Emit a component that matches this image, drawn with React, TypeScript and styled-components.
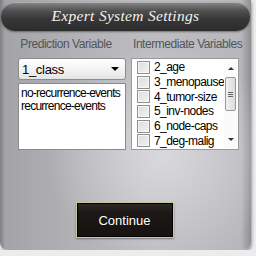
import styled, { createGlobalStyle } from 'styled-components';

const predictionValues = ['no-recurrence-events', 'recurrence-events'];
const intermediate = ['2_age', '3_menopause', '4_tumor-size', '5_inv-nodes', '6_node-caps', '7_deg-malig'];

function App() {
  return (
    <>
      <GlobalStyle />
      <Window>
        <TitleBar>Expert System Settings</TitleBar>
        <Columns>
          <Column>
            <Label shift={-6}>Prediction Variable</Label>
            <Select>
              <span>1_class</span>
              <Arrow />
            </Select>
            <ValueList>
              {predictionValues.map((v) => (
                <div key={v}>{v}</div>
              ))}
            </ValueList>
          </Column>
          <Column>
            <Label shift={2}>Intermediate Variables</Label>
            <CheckList>
              <Rows>
                {intermediate.map((name) => (
                  <Row key={name}>
                    <Box />
                    <span>{name}</span>
                  </Row>
                ))}
              </Rows>
              <ScrollBar>
                <ScrollArrow up />
                <Thumb>
                  <Grip />
                </Thumb>
                <ScrollArrow />
              </ScrollBar>
            </CheckList>
          </Column>
        </Columns>
        <Footer>
          <ContinueButton>Continue</ContinueButton>
        </Footer>
      </Window>
    </>
  );
}

export default App;

const GlobalStyle = createGlobalStyle`
  body {
    margin: 0;
    background: #ececec;
    font-family: 'Liberation Sans', Arial, sans-serif;
  }
`;
const Window = styled.div`
  width: 251px;
  height: 250px;
  display: flex;
  flex-direction: column;
  border-radius: 0 0 8px 8px;
  background:
    radial-gradient(ellipse at 65% 62%, rgba(222, 222, 226, 0.85), rgba(222, 222, 226, 0) 50%),
    linear-gradient(90deg, #7e7e82 0px, #a4a4a8 5px, #b2b2b6 30%, #bdbdc1 60%, #b8b8bc 96%, #8e8e92 100%);
  box-shadow: 1px 2px 3px rgba(0, 0, 0, 0.35);
`;
const TitleBar = styled.div`
  margin: 2px 1px 0 1px;
  height: 29px;
  border-radius: 14px;
  background: linear-gradient(180deg, #8a8a8a 0%, #505050 30%, #363636 60%, #2c2c2c 100%);
  box-shadow: inset 0 1px 0 rgba(255, 255, 255, 0.35), 0 1px 2px rgba(0, 0, 0, 0.4);
  color: #f2f2f2;
  font-family: 'Liberation Serif', 'Times New Roman', serif;
  font-style: italic;
  font-size: 15.5px;
  letter-spacing: 0.3px;
  display: flex;
  align-items: center;
  justify-content: center;
  padding-bottom: 2px;
  box-sizing: border-box;
`;
const Columns = styled.div`
  display: flex;
  gap: 5px;
  padding: 6px 0 0 18px;
`;
const Column = styled.div`
  width: 108px;
  display: flex;
  flex-direction: column;
`;
const Label = styled.div<{ shift: number }>`
  height: 21px;
  text-align: center;
  font-size: 12px;
  letter-spacing: -0.45px;
  color: #50555a;
  position: relative;
  left: ${(p) => p.shift}px;
  white-space: nowrap;
`;
const Select = styled.div`
  height: 22px;
  box-sizing: border-box;
  border: 1px solid #8c8c8c;
  border-radius: 3px;
  background: linear-gradient(180deg, #ffffff 0%, #f4f4f4 50%, #e4e4e4 100%);
  display: flex;
  align-items: center;
  justify-content: space-between;
  padding: 0 6px 0 3px;
  font-size: 13px;
  letter-spacing: -0.3px;
  color: #000;
`;
const Arrow = styled.span`
  width: 0;
  height: 0;
  border-left: 4px solid transparent;
  border-right: 4px solid transparent;
  border-top: 4px solid #000;
`;
const ValueList = styled.div`
  margin-top: 3px;
  height: 67px;
  box-sizing: border-box;
  background: #fff;
  border: 1px solid #8a8a8a;
  padding: 3px 2px;
  font-size: 12px;
  letter-spacing: -0.75px;
  line-height: 13px;
  color: #000;
  white-space: nowrap;
`;
const CheckList = styled.div`
  height: 92px;
  box-sizing: border-box;
  background: #fff;
  border: 1px solid #9a9a9a;
  display: flex;
  padding: 1px;
`;
const Rows = styled.div`
  flex: 1;
  display: flex;
  flex-direction: column;
  padding: 0 0 0 4px;
  overflow: hidden;
`;
const Row = styled.div`
  height: 15px;
  display: flex;
  align-items: center;
  gap: 4px;
  font-size: 12px;
  letter-spacing: -0.55px;
  color: #000;
  white-space: nowrap;
`;
const Box = styled.span`
  width: 11px;
  height: 11px;
  border: 1px solid #8e8f8f;
  background: linear-gradient(135deg, #dcdcdc 0%, #f2f2f2 100%);
  box-shadow: inset 0 0 0 1px #f6f6f6;
  flex-shrink: 0;
`;
const ScrollBar = styled.div`
  width: 13px;
  display: flex;
  flex-direction: column;
  align-items: center;
  background: #fbfbfb;
`;
const ScrollArrow = styled.div<{ up?: boolean }>`
  height: 17px;
  width: 100%;
  display: flex;
  align-items: center;
  justify-content: center;
  margin-top: ${(p) => (p.up ? 0 : 'auto')};
  &::after {
    content: '';
    border-left: 3px solid transparent;
    border-right: 3px solid transparent;
    ${(p) => (p.up ? 'border-bottom: 3px solid #333;' : 'border-top: 3px solid #333;')}
  }
`;
const Thumb = styled.div`
  width: 11px;
  height: 34px;
  box-sizing: border-box;
  border: 1px solid #9a9a9a;
  border-radius: 2px;
  background: linear-gradient(90deg, #f0f0f0, #dcdcdc);
  display: flex;
  align-items: center;
  justify-content: center;
`;
const Grip = styled.div`
  width: 5px;
  height: 5px;
  border-top: 1px solid #666;
  border-bottom: 1px solid #666;
  box-sizing: border-box;
  background: linear-gradient(#666, #666) center / 100% 1px no-repeat;
`;
const Footer = styled.div`
  display: flex;
  justify-content: center;
  padding: 52px 0 0 0;
  padding-right: 2px;
`;
const ContinueButton = styled.button`
  width: 98px;
  height: 36px;
  box-sizing: border-box;
  border: 1px solid #c9caa2;
  border-radius: 1px;
  background: linear-gradient(180deg, #2e2a26 0%, #1c1815 30%, #151210 100%);
  box-shadow: inset 0 0 0 1px #000, 0 1px 2px rgba(0, 0, 0, 0.4);
  color: #fff;
  font-family: 'Liberation Sans', Arial, sans-serif;
  font-size: 13px;
  padding: 0;
`;
